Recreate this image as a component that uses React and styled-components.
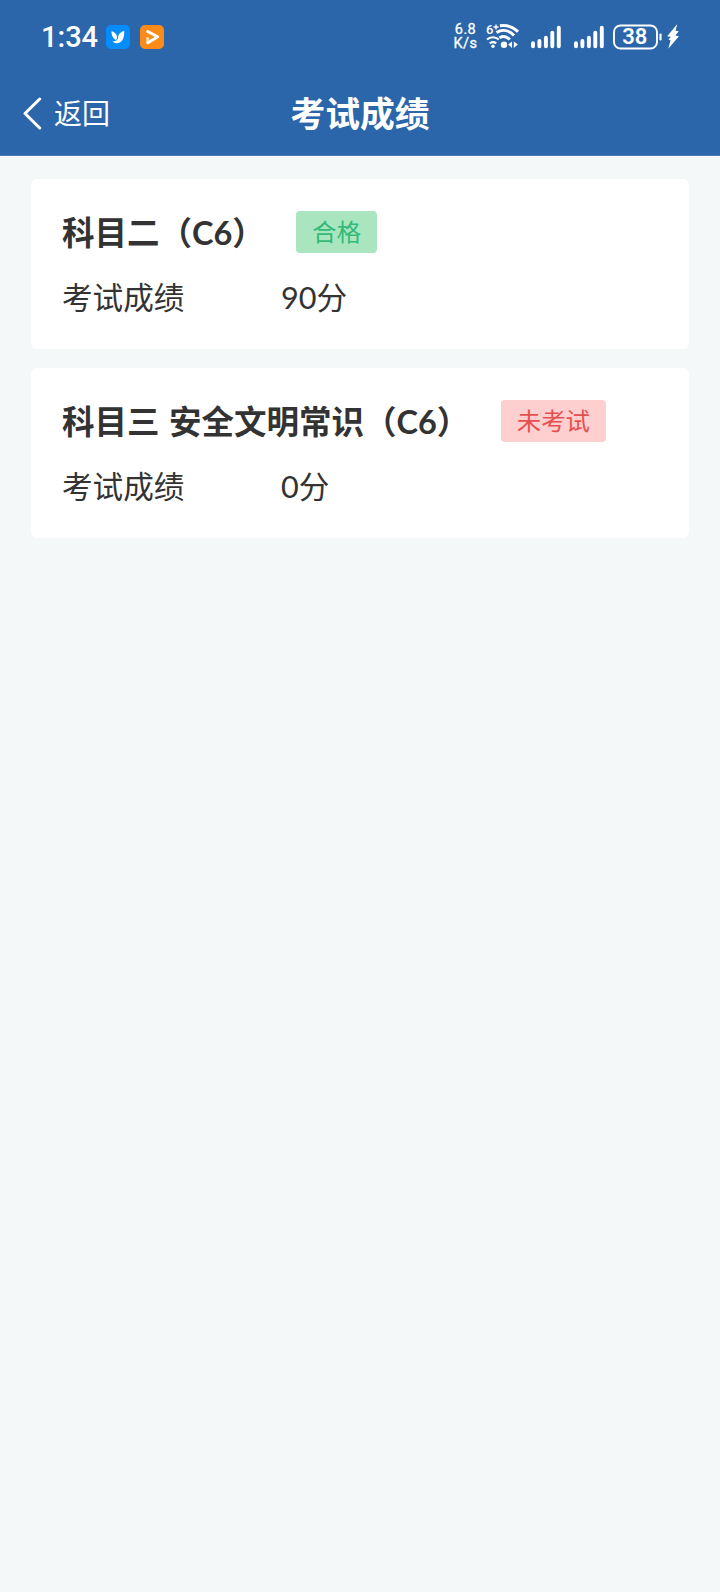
import React from "react";
import styled, { createGlobalStyle } from "styled-components";

const GlobalStyle = createGlobalStyle`
	* {
		box-sizing: border-box;
	}
	body {
		margin: 0;
		background: #f4f8f9;
		color: #333;
		font-family: Lato, "Noto Sans CJK SC", sans-serif;
	}
`;

const Page = styled.div`
	min-height: 1592px;
	background: #f4f8f9;
`;

const Header = styled.header`
	height: 156px;
	background: #2c66aa;
	border-bottom: 1px solid #4a7bb2;
	color: white;
`;

const StatusBar = styled.div`
	display: flex;
	justify-content: space-between;
	align-items: center;
	height: 73px;
	padding: 0 41px;
`;

const StatusGroup = styled.div`
	display: flex;
	align-items: center;
`;

const Slot = styled.span`
	flex: none;
	margin-left: ${props => props.$gap}px;
	svg {
		display: block;
	}
`;

const Clock = styled.span`
	width: 55px;
	font-family: Roboto, sans-serif;
	font-size: 29px;
	font-weight: 500;
	line-height: 34px;
	white-space: nowrap;
`;

const Speed = styled.div`
	display: flex;
	flex-direction: column;
	align-items: center;
	width: 24px;
	font-family: Roboto, sans-serif;
	font-size: 14.5px;
	line-height: 14px;
	letter-spacing: 0.4px;
	white-space: nowrap;
	-webkit-text-stroke: 0.3px white;
`;

const NavBar = styled.nav`
	display: grid;
	grid-template-columns: 1fr auto 1fr;
	align-items: center;
	height: 80px;
	padding: 0 22px;
`;

const Back = styled.div`
	display: flex;
	align-items: center;
	gap: 12px;
	font-size: 28px;
	line-height: 40px;
`;

const NavTitle = styled.h1`
	margin: 0;
	padding-top: 2px;
	font-size: 34.8px;
	line-height: 50px;
	font-weight: 700;
`;

const List = styled.main`
	display: flex;
	flex-direction: column;
	gap: 19.4px;
	padding: 23px 31px;
`;

const Card = styled.section`
	height: 170px;
	padding: 32px 31px 0;
	border-radius: 6px;
	background: white;
`;

const CardHead = styled.div`
	display: flex;
	align-items: center;
	gap: 31.5px;
	height: 42px;
`;

const Subject = styled.h2`
	margin: 0;
	padding-top: 1px;
	font-size: 32.5px;
	line-height: 42px;
	font-weight: 700;
	white-space: nowrap;
	word-spacing: 1.5px;
`;

const Badge = styled.span`
	padding: 0 16px;
	border-radius: 4px;
	background: ${props => props.$passed ? "#a9e6bf" : "#fdcfcf"};
	color: ${props => props.$passed ? "#34b978" : "#e64f4f"};
	font-size: 24.4px;
	line-height: 42px;
	white-space: nowrap;
`;

const ScoreRow = styled.div`
	display: grid;
	grid-template-columns: 219px 1fr;
	margin-top: 23px;
	font-size: 30.6px;
	line-height: 44px;
`;

const results = [
	{ subject: "科目二（C6）", status: "合格", passed: true, score: 90 },
	{ subject: "科目三 安全文明常识（C6）", status: "未考试", passed: false, score: 0 }
];

const BirdIcon = () => (
	<svg width="24" height="24" viewBox="0 0 24 24">
		<rect width="24" height="24" rx="5" fill="#078cfb" />
		<path d="M5.500 6.300c3.200.7 5.500 3 5.500 6.200 0 1.100-.3 2-.9 2.500C7.200 14 5.300 10.500 5.500 6.300z" fill="white" />
		<path d="M18.200 6c.4 7-2.200 12.200-7.400 12.200-1.900 0-3.300-.7-4.300-2 2.800.4 5.300-.9 5.600-3.700C12.400 9 14.800 6.600 18.200 6z" fill="white" />
	</svg>
);

const VideoIcon = () => (
	<svg width="24" height="24" viewBox="0 0 24 24">
		<rect width="24" height="24" rx="5" fill="#fb8b18" />
		<path d="M7.700 17.600V13.500" fill="none" stroke="#ffdcb3" strokeWidth="3" strokeLinecap="round" />
		<path d="M7.700 6.500l10 5.300-9.800 6" fill="none" stroke="white" strokeWidth="2.900" strokeLinejoin="round" strokeLinecap="round" />
	</svg>
);

const WifiIcon = () => (
	<svg width="34" height="27" viewBox="0 0 34 27">
		<text x="0" y="10.500" fill="white" fontFamily="Roboto, sans-serif" fontSize="13" fontWeight="500">6</text>
		<g fill="none" stroke="white">
			<path d="M7.500 4h5M10 1.500v5" strokeWidth="1.400" />
			<path d="M14 2.800c7-1.200 13 1 18 6" strokeWidth="3" />
			<path d="M10.500 9.500c6-3.500 12.500-2.300 17.500 3" strokeWidth="3" />
			<path d="M13.500 14.700c3.500-2 7.300-1.400 10.300 1.800" strokeWidth="2.900" />
			<path d="M1 16.500c3.300-3 8.500-3 11.800 0M3.800 20.300c2-1.500 4.400-1.500 6.400 0" strokeWidth="2.200" />
		</g>
		<circle cx="7" cy="23.300" r="1.700" fill="white" />
		<circle cx="18" cy="21.800" r="3.200" fill="white" />
		<path d="M26 18.500v6.500l-3.800-3.500zM27.800 18.500v6.500l4-3.500z" fill="white" />
	</svg>
);

const SignalIcon = () => (
	<svg width="30" height="24" viewBox="0 0 30 24">
		<g stroke="white" strokeWidth="3.900" strokeLinecap="round">
			<path d="M2 18.300v3M8.400 16v5.300M14.900 12.700v8.600M21.300 7.800v13.500M27.800 2.700v18.600" />
		</g>
	</svg>
);

const BatteryIcon = () => (
	<svg width="49" height="26" viewBox="0 0 49 26">
		<rect x="1" y="1.500" width="43" height="23" rx="6.500" fill="none" stroke="white" strokeWidth="1.900" />
		<path d="M47.500 10.500v5" stroke="white" strokeWidth="2.200" strokeLinecap="round" />
		<text x="21.800" y="20.300" textAnchor="middle" fill="white" fontFamily="Roboto, sans-serif" fontSize="22" fontWeight="600">38</text>
	</svg>
);

const BoltIcon = () => (
	<svg width="12" height="25" viewBox="0 0 12 25">
		<path d="M10.300 0L.2 12.300l3.600.8-2.300 2.500 2 .6L1.300 24.700 11.900 12.300l-3.500-.9 3.300-4.200-3.200-.4z" fill="white" />
	</svg>
);

const BackIcon = () => (
	<svg width="20" height="33" viewBox="0 0 20 33">
		<path d="M17.700 2L3 16.500 17.700 31" fill="none" stroke="white" strokeWidth="3" strokeLinecap="round" strokeLinejoin="round" />
	</svg>
);

const Result = ({ subject, status, passed, score }) => (
	<Card>
		<CardHead>
			<Subject>{subject}</Subject>
			<Badge $passed={passed}>{status}</Badge>
		</CardHead>
		<ScoreRow>
			<span>考试成绩</span>
			<span>{score}分</span>
		</ScoreRow>
	</Card>
);

export default () => (
	<Page>
		<GlobalStyle />
		<Header>
			<StatusBar>
				<StatusGroup>
					<Clock>1:34</Clock>
					<Slot $gap={9.5}><BirdIcon /></Slot>
					<Slot $gap={10}><VideoIcon /></Slot>
				</StatusGroup>
				<StatusGroup>
					<Speed>
						<span>6.8</span>
						<span>K/s</span>
					</Speed>
					<Slot $gap={8.5}><WifiIcon /></Slot>
					<Slot $gap={11}><SignalIcon /></Slot>
					<Slot $gap={13}><SignalIcon /></Slot>
					<Slot $gap={8.5}><BatteryIcon /></Slot>
					<Slot $gap={5.5}><BoltIcon /></Slot>
				</StatusGroup>
			</StatusBar>
			<NavBar>
				<Back>
					<BackIcon />
					<span>返回</span>
				</Back>
				<NavTitle>考试成绩</NavTitle>
			</NavBar>
		</Header>
		<List>
			{results.map(result => <Result key={result.subject} {...result} />)}
		</List>
	</Page>
);
